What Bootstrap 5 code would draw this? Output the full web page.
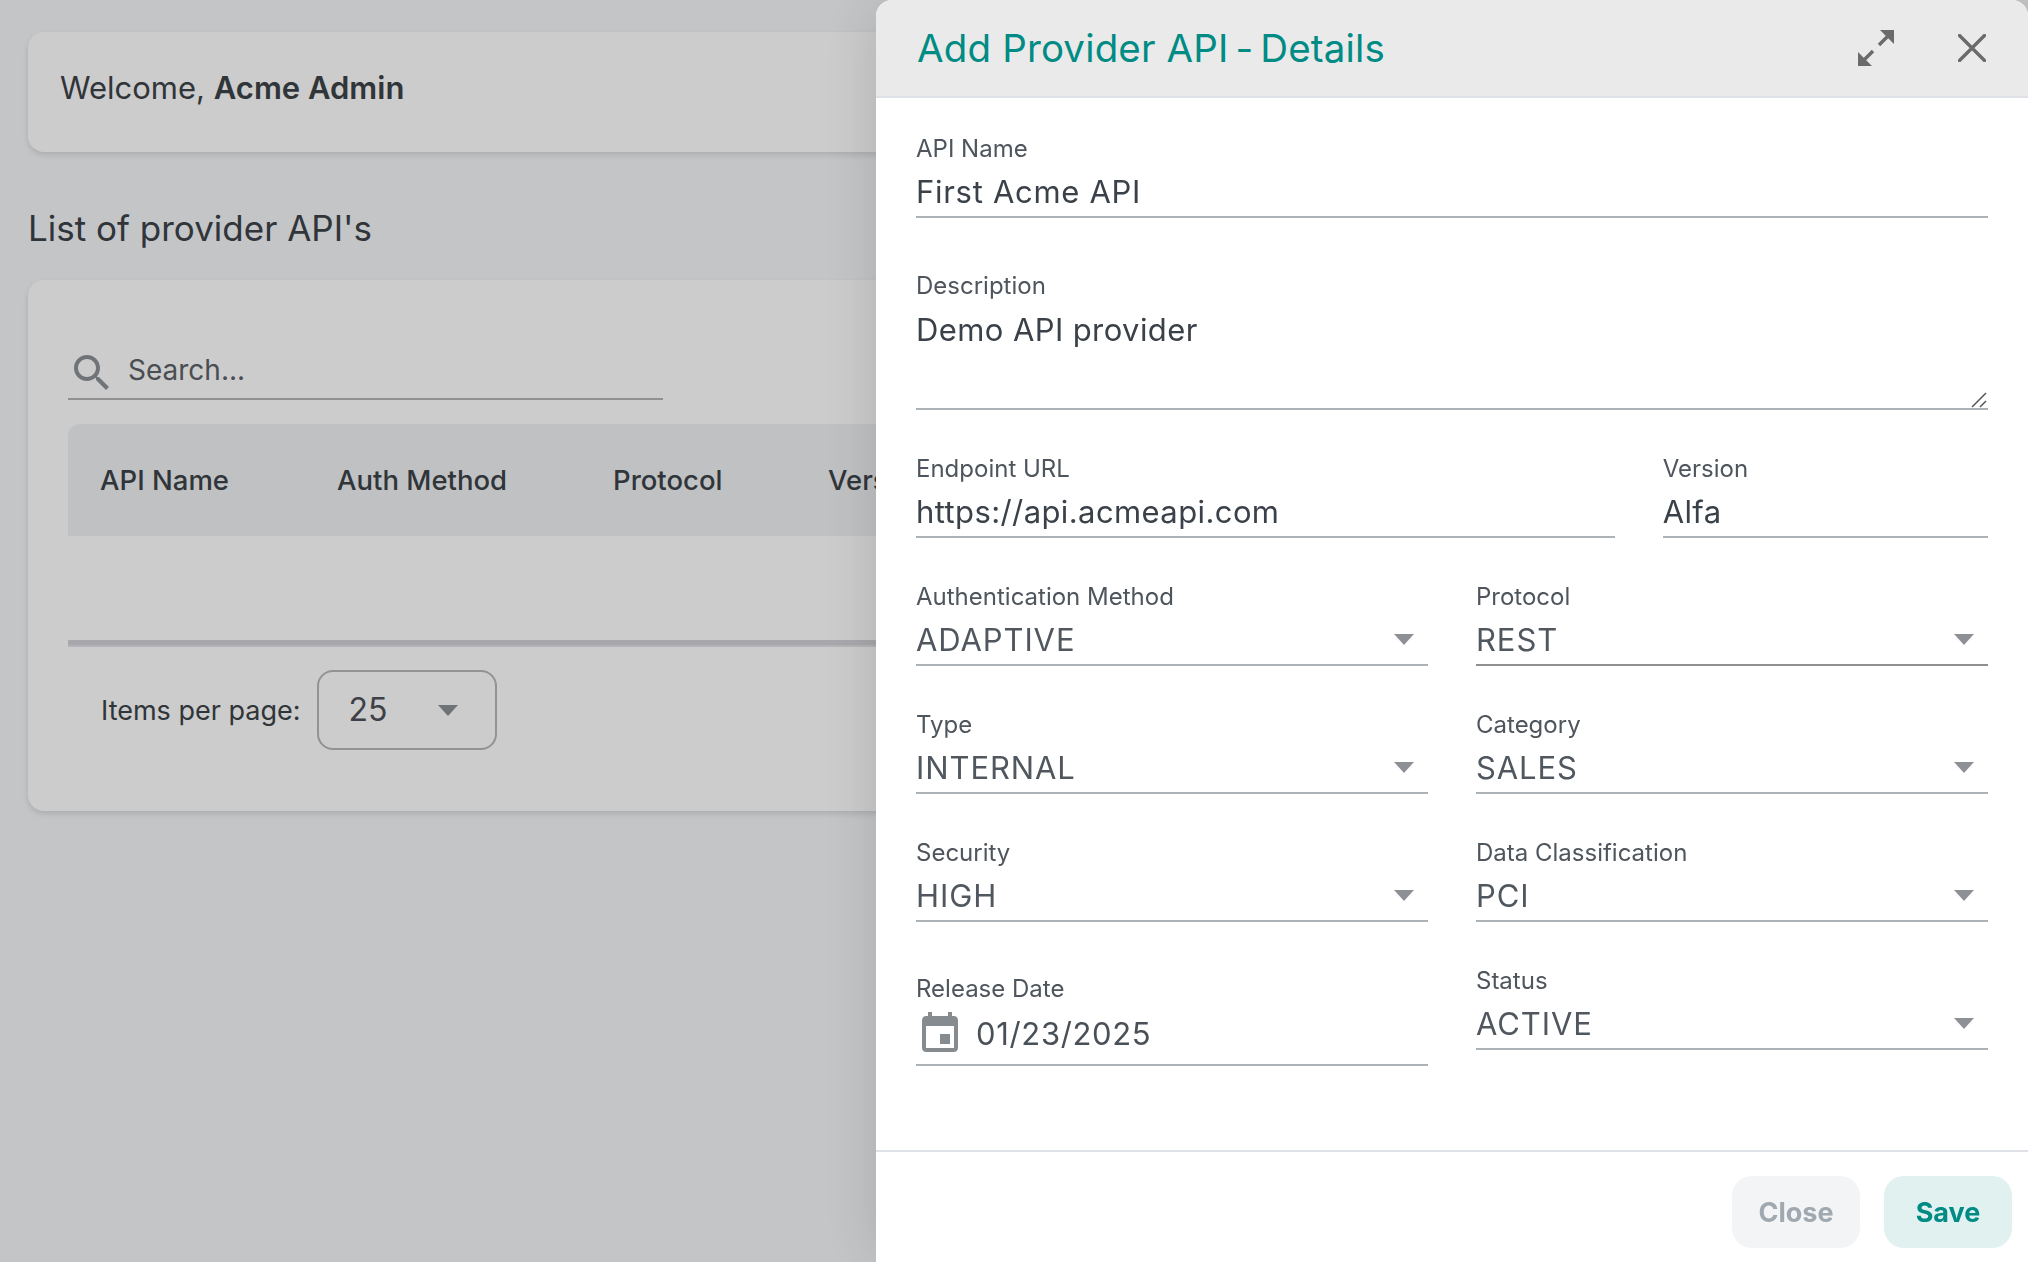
<!DOCTYPE html>
<html lang="en">
<head>
<meta charset="utf-8">
<title>Provider APIs</title>
<link href="https://cdn.jsdelivr.net/npm/bootstrap@5.3.0/dist/css/bootstrap.min.css" rel="stylesheet">
<script src="https://cdn.jsdelivr.net/npm/bootstrap@5.3.0/dist/js/bootstrap.bundle.min.js"></script>
<style>
html,body{height:1262px;overflow:hidden}
body{background:#f5f7f9;font-family:Inter,"Liberation Sans",sans-serif;color:#3c4349;font-size:30px}
.page-wrap{padding:32px 0 0 28px;width:2000px}
.soft-card{border:0;border-radius:16px;background:#fff;color:#3c4349;box-shadow:0 3px 6px rgba(0,0,0,.12)}
.welcome-card{height:120px;padding:0 32px 8px;justify-content:center;font-size:31px}
.welcome-card strong{font-weight:600}
.list-title{font-size:35px;font-weight:400;line-height:56px;margin:48px 0 24px}
.list-card{height:531px;padding:74px 40px 0}
.search-box{width:595px;height:46px;border-bottom:2px solid #b3b4b4;gap:12px;margin-bottom:24px}
.search-box svg{width:48px;height:48px;margin-top:-6px;fill:#8c9298;flex:none}
.search-text{font-size:28px;color:#5c6268;line-height:30px;margin-top:-12px}
.api-table{width:1900px;table-layout:fixed;margin:0;--bs-table-bg:transparent}
.api-table th{background:#f0f2f4;height:112px;padding:2px 0 0 32px;vertical-align:middle;font-size:27.5px;font-weight:500;border:0;color:#3c4349}
.api-table th:first-child{border-top-left-radius:12px}
.api-table td{height:104px;padding:0;border:0}
.w-a{width:237px}.w-b{width:276px}.w-c{width:215px}
.table-rule{height:7px;background:#d3d3d8;border-bottom:2px solid #e2e2e6;width:1900px}
.pager{padding:23px 0 0 33px;gap:16px;font-size:27px}
.pager-lab{padding-top:2px}
.page-select{width:180px;height:80px;border:2px solid #b6b8bb;border-radius:16px;padding:0 37px 0 30px;font-size:32px;color:#4d5259}
.tri{width:0;height:0;border-left:10px solid transparent;border-right:10px solid transparent;border-top:11px solid #8d9094;flex:none}
.modal-panel.offcanvas{--bs-offcanvas-width:1152px;border:0;border-radius:16px 16px 0 0;box-shadow:0 0 60px rgba(0,0,0,.15);background:#fff}
.page-dim{position:fixed;inset:0;z-index:1040;background:rgba(0,0,0,.2)}
.panel-head.offcanvas-header{height:98px;padding:0 41px 0 41px;background:#eaeaea;border-bottom:2px solid #dee2e6;border-radius:16px 16px 0 0}
.panel-title{font-size:38.5px;letter-spacing:.15px;font-weight:400;color:#008b85;margin:0;line-height:1}
.title-dash{margin:0 -4px}
.head-tools{gap:64px;padding-right:1px}
.tool-btn{padding:0;border:0;background:none;line-height:0}
.tool-btn svg{width:36px;height:36px;display:block}
.tool-x svg{width:28px;height:28px}
.panel-body.offcanvas-body{padding:34px 40px 0;overflow:hidden;flex:1}
.fld-row{--bs-gutter-x:48px}
.fld{margin-bottom:42px}
.fld-first{margin-bottom:51px}
.fld-lab.form-label{display:block;margin:0;font-size:24px;height:32px;padding-top:2px;line-height:30px;color:#4e555c}
.fld-val.form-control{height:54px;padding:3px 0 0;border:0;border-bottom:2px solid #adb2b6;border-radius:0;background:transparent;font-size:31px;letter-spacing:.4px;line-height:49px;color:#3a4148}
.fld-name.form-control{letter-spacing:.7px}
.fld-area.form-control{height:109px;position:relative;line-height:54px;padding:2px 0 0}
.fld-area svg{position:absolute;right:1px;bottom:0;width:16px;height:16px}
.fld-sel.form-control{display:flex;align-items:center;justify-content:space-between;padding-right:14px;color:#50575e;letter-spacing:.9px}
.fld-dark.form-control{border-bottom-color:#8f8f8f}
.fld-date{margin-top:7px;margin-bottom:0}
.fld-date .fld-lab.form-label{padding-top:4px;line-height:28px}
.fld-date .fld-val{height:63px;display:flex;align-items:center;gap:12px;padding:0;color:#495057;letter-spacing:.66px}
.fld-date svg{width:48px;height:48px;fill:#868b90;flex:none}
.panel-foot{height:112px;border-top:2px solid #dee2e6;padding:24px 16px 0 0;gap:24px;justify-content:flex-end}
.act-btn.btn{width:128px;height:72px;border:0;border-radius:20px;font-size:27px;font-weight:700;padding:3px 0 0}
.act-close.btn,.act-close.btn:disabled{background:#f3f4f6;color:#a0a8b0;opacity:1}
.act-save.btn{background:#e0f1f0;color:#008b85}
</style>
</head>
<body>
<div class="page-wrap">
  <div class="card soft-card welcome-card">
    <div>Welcome, <strong>Acme Admin</strong></div>
  </div>
  <h2 class="list-title">List of provider API's</h2>
  <div class="card soft-card list-card">
    <div class="search-box d-flex align-items-center">
      <svg viewBox="0 0 24 24"><path d="M15.5 14h-.79l-.28-.27C15.41 12.59 16 11.11 16 9.5 16 5.91 13.09 3 9.5 3S3 5.91 3 9.5 5.91 16 9.5 16c1.61 0 3.09-.59 4.23-1.57l.27.28v.79l5 4.99L20.49 19l-4.99-5zm-6 0C7.01 14 5 11.99 5 9.5S7.01 5 9.5 5 14 7.01 14 9.5 11.99 14 9.5 14z"/></svg>
      <span class="search-text">Search...</span>
    </div>
    <table class="table api-table">
      <thead><tr><th class="w-a">API Name</th><th class="w-b">Auth Method</th><th class="w-c">Protocol</th><th>Version</th></tr></thead>
      <tbody><tr><td colspan="4"></td></tr></tbody>
    </table>
    <div class="table-rule"></div>
    <div class="pager d-flex align-items-center">
      <span class="pager-lab">Items per page:</span>
      <div class="page-select d-flex align-items-center justify-content-between"><span>25</span><span class="tri"></span></div>
    </div>
  </div>
</div>

<div class="page-dim"></div>
<div class="offcanvas offcanvas-end show modal-panel d-flex flex-column" tabindex="-1" data-bs-backdrop="false" data-bs-scroll="true">
  <div class="offcanvas-header panel-head">
    <h5 class="panel-title">Add Provider API <span class="title-dash">-</span> Details</h5>
    <div class="d-flex align-items-center head-tools">
      <button class="tool-btn" type="button" aria-label="Expand">
        <svg viewBox="0 0 36 36"><path fill="#6b6b6b" d="M22 0H36V14ZM0 22V36H14Z"/><path stroke="#6b6b6b" stroke-width="3.4" d="M21 15 30 6M15 21 6 30"/></svg>
      </button>
      <button class="tool-btn tool-x" type="button" aria-label="Close">
        <svg viewBox="0 0 28 28"><path stroke="#6b6b6b" stroke-width="3.4" stroke-linecap="round" d="M1.5 1.5 26.5 26.5M26.5 1.5 1.5 26.5"/></svg>
      </button>
    </div>
  </div>
  <div class="offcanvas-body panel-body">
    <div class="fld fld-first">
      <label class="form-label fld-lab">API Name</label>
      <div class="form-control fld-val fld-name">First Acme API</div>
    </div>
    <div class="fld">
      <label class="form-label fld-lab">Description</label>
      <div class="form-control fld-val fld-area">Demo API provider
        <svg viewBox="0 0 16 16"><path stroke="#555" stroke-width="1.5" fill="none" d="M1 15 15 1M9 15 15 9"/></svg>
      </div>
    </div>
    <div class="row fld-row">
      <div class="col-8 fld"><label class="form-label fld-lab">Endpoint URL</label><div class="form-control fld-val">https://api.acmeapi.com</div></div>
      <div class="col-4 fld"><label class="form-label fld-lab">Version</label><div class="form-control fld-val">Alfa</div></div>
    </div>
    <div class="row fld-row">
      <div class="col-6 fld"><label class="form-label fld-lab">Authentication Method</label><div class="form-control fld-val fld-sel"><span>ADAPTIVE</span><span class="tri"></span></div></div>
      <div class="col-6 fld"><label class="form-label fld-lab">Protocol</label><div class="form-control fld-val fld-sel fld-dark"><span>REST</span><span class="tri"></span></div></div>
    </div>
    <div class="row fld-row">
      <div class="col-6 fld"><label class="form-label fld-lab">Type</label><div class="form-control fld-val fld-sel"><span>INTERNAL</span><span class="tri"></span></div></div>
      <div class="col-6 fld"><label class="form-label fld-lab">Category</label><div class="form-control fld-val fld-sel"><span>SALES</span><span class="tri"></span></div></div>
    </div>
    <div class="row fld-row">
      <div class="col-6 fld"><label class="form-label fld-lab">Security</label><div class="form-control fld-val fld-sel"><span>HIGH</span><span class="tri"></span></div></div>
      <div class="col-6 fld"><label class="form-label fld-lab">Data Classification</label><div class="form-control fld-val fld-sel"><span>PCI</span><span class="tri"></span></div></div>
    </div>
    <div class="row fld-row">
      <div class="col-6 fld fld-date"><label class="form-label fld-lab">Release Date</label><div class="form-control fld-val"><svg viewBox="0 0 24 24"><path d="M17 12h-5v5h5v-5zM16 1v2H8V1H6v2H5c-1.11 0-1.99.9-1.99 2L3 19c0 1.1.89 2 2 2h14c1.1 0 2-.9 2-2V5c0-1.1-.9-2-2-2h-1V1h-2zm3 18H5V8h14v11z"/></svg><span>01/23/2025</span></div></div>
      <div class="col-6 fld"><label class="form-label fld-lab">Status</label><div class="form-control fld-val fld-sel"><span>ACTIVE</span><span class="tri"></span></div></div>
    </div>
  </div>
  <div class="panel-foot d-flex">
    <button type="button" class="btn act-btn act-close" disabled>Close</button>
    <button type="button" class="btn act-btn act-save">Save</button>
  </div>
</div>
</body>
</html>
